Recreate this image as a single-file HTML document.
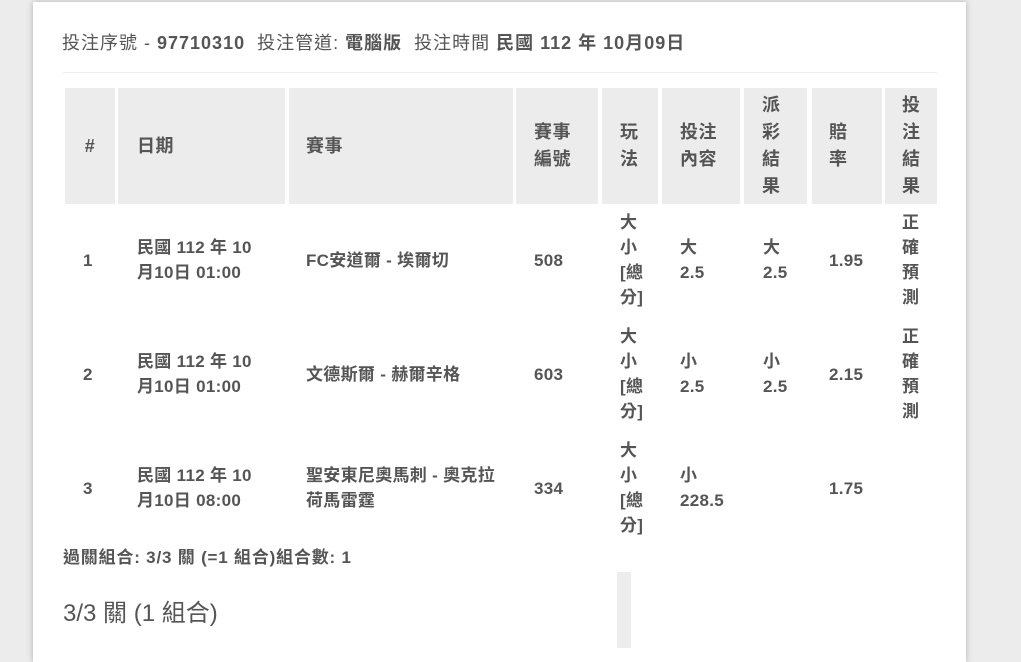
<!DOCTYPE html>
<html><head><meta charset="utf-8"><style>
*{margin:0;padding:0;box-sizing:border-box}
body{width:1021px;height:648px;background:#ececec;font-family:"Liberation Sans","Noto Sans CJK TC",sans-serif;color:#555;position:relative;overflow:hidden}
.panel{position:absolute;left:33px;top:2px;width:933px;height:660px;background:#fff;box-shadow:0 0 6px rgba(0,0,0,.25)}
.a{position:absolute}
.h{position:absolute;top:88px;height:116px;background:#ececec;display:flex;align-items:center;font-weight:bold;font-size:18px;line-height:27px;color:#555;letter-spacing:.5px}
.c{position:absolute;display:flex;align-items:center;font-weight:bold;font-size:17px;line-height:25px;color:#555;white-space:nowrap;letter-spacing:.3px}
</style></head><body>
<div class="panel"></div>
<div class="a" style="left:62px;top:31px;font-size:18px;line-height:24px;white-space:nowrap;letter-spacing:1px">投注序號 - <b>97710310</b>&nbsp; 投注管道: <b>電腦版</b>&nbsp; 投注時間 <b>民國 112 年 10月09日</b></div>
<div class="a" style="left:63px;top:72px;width:874px;height:1px;background:#eee"></div>

<div class="h" style="left:65px;width:50px;justify-content:center">#</div>
<div class="h" style="left:118px;width:167px;padding-left:19px">日期</div>
<div class="h" style="left:289px;width:224px;padding-left:17px">賽事</div>
<div class="h" style="left:516px;width:82px;padding-left:18px">賽事<br>編號</div>
<div class="h" style="left:602px;width:56px;padding-left:18px">玩<br>法</div>
<div class="h" style="left:662px;width:78px;padding-left:18px">投注<br>內容</div>
<div class="h" style="left:744px;width:63px;padding-left:18px">派<br>彩<br>結<br>果</div>
<div class="h" style="left:812px;width:70px;padding-left:17px">賠<br>率</div>
<div class="h" style="left:885px;width:52px;padding-left:17px">投<br>注<br>結<br>果</div>

<!-- row 1 -->
<div class="c" style="left:83px;top:210px;height:100px">1</div>
<div class="c" style="left:137px;top:210px;height:100px">民國 112 年 10<br>月10日 01:00</div>
<div class="c" style="left:306px;top:210px;height:100px">FC安道爾 - 埃爾切</div>
<div class="c" style="left:534px;top:210px;height:100px">508</div>
<div class="c" style="left:620px;top:210px;height:100px">大<br>小<br>[總<br>分]</div>
<div class="c" style="left:680px;top:210px;height:100px">大<br>2.5</div>
<div class="c" style="left:763px;top:210px;height:100px">大<br>2.5</div>
<div class="c" style="left:829px;top:210px;height:100px">1.95</div>
<div class="c" style="left:902px;top:210px;height:100px">正<br>確<br>預<br>測</div>
<!-- row 2 -->
<div class="c" style="left:83px;top:324px;height:100px">2</div>
<div class="c" style="left:137px;top:324px;height:100px">民國 112 年 10<br>月10日 01:00</div>
<div class="c" style="left:306px;top:324px;height:100px">文德斯爾 - 赫爾辛格</div>
<div class="c" style="left:534px;top:324px;height:100px">603</div>
<div class="c" style="left:620px;top:324px;height:100px">大<br>小<br>[總<br>分]</div>
<div class="c" style="left:680px;top:324px;height:100px">小<br>2.5</div>
<div class="c" style="left:763px;top:324px;height:100px">小<br>2.5</div>
<div class="c" style="left:829px;top:324px;height:100px">2.15</div>
<div class="c" style="left:902px;top:324px;height:100px">正<br>確<br>預<br>測</div>
<!-- row 3 -->
<div class="c" style="left:83px;top:438px;height:100px">3</div>
<div class="c" style="left:137px;top:438px;height:100px">民國 112 年 10<br>月10日 08:00</div>
<div class="c" style="left:306px;top:438px;height:100px">聖安東尼奧馬刺 - 奧克拉<br>荷馬雷霆</div>
<div class="c" style="left:534px;top:438px;height:100px">334</div>
<div class="c" style="left:620px;top:438px;height:100px">大<br>小<br>[總<br>分]</div>
<div class="c" style="left:680px;top:438px;height:100px">小<br>228.5</div>
<div class="c" style="left:829px;top:438px;height:100px">1.75</div>

<div class="a" style="left:63px;top:547px;font-weight:bold;font-size:17px;line-height:22px;white-space:nowrap;letter-spacing:.8px">過關組合: 3/3 關 (=1 組合)組合數: 1</div>
<div class="a" style="left:63px;top:600px;font-size:24px;line-height:28px;white-space:nowrap">3/3 關 (1 組合)</div>
<div class="a" style="left:617px;top:572px;width:14px;height:76px;background:#ececec"></div>
</body></html>
